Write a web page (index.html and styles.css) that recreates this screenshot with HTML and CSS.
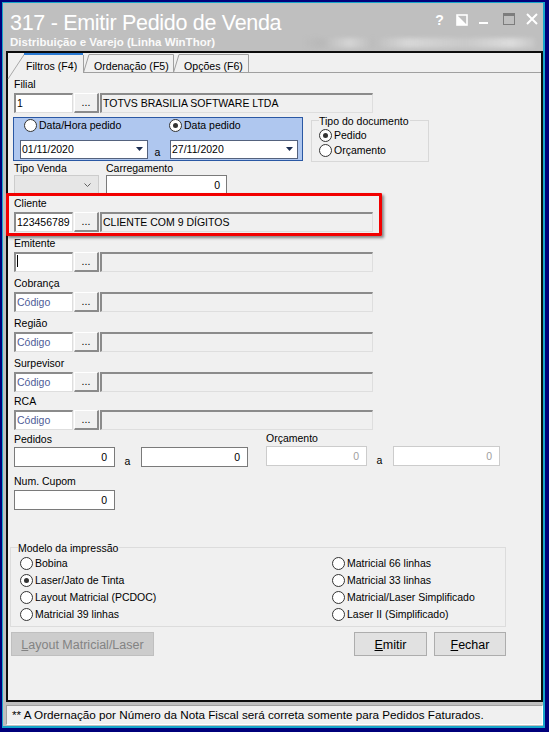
FILE: index.html
```html
<!DOCTYPE html>
<html lang="pt-BR">
<head>
<meta charset="utf-8">
<title>317 - Emitir Pedido de Venda</title>
<link rel="stylesheet" href="styles.css">
</head>
<body>
<div class="window">
  <div class="frame">

    <!-- barra de titulo -->
    <div class="titlebar">
      <div class="title-row">
        <h1 class="title">317 - Emitir Pedido de Venda</h1>
        <div class="caption-btns">
          <span class="cap-help">?</span>
          <svg class="cap-pin" width="12" height="12" viewBox="0 0 12 12"><rect x="1" y="1" width="10" height="10" fill="none" stroke="#fff" stroke-width="1.6"/><path d="M1 1 L11 11 H1 Z" fill="#fff"/></svg>
          <svg class="cap-min" width="9" height="3" viewBox="0 0 9 3"><rect width="9" height="2" fill="#fff"/></svg>
          <svg class="cap-max" width="12" height="12" viewBox="0 0 12 12"><rect x="0.5" y="0.5" width="11" height="11" fill="none" stroke="#7d7d7d"/><rect width="12" height="3" fill="#7d7d7d"/></svg>
          <svg class="cap-close" width="12" height="12" viewBox="0 0 12 12"><path d="M1 1 L11 11 M11 1 L1 11" stroke="#fff" stroke-width="2"/></svg>
        </div>
      </div>
      <div class="sub-row">
        <p class="subtitle">Distribuição e Varejo (Linha WinThor)</p>
        <div class="smudge"></div>
      </div>
    </div>

    <div class="panel">
      <div class="tabs">
        <svg class="tab-shapes" width="533" height="28" viewBox="0 0 533 28">
          <path d="M0 26 L16.5 1" stroke="#a8a8a8" fill="none"/>
          <rect x="16" y="0" width="59" height="2" fill="#2a7bd4"/>
          <path d="M75.5 2 V19.5 L81 1.5 H165.5 V19.5 L171 1.5 H240.5 V19.5" stroke="#a0a0a0" fill="none"/>
          <line x1="75" y1="19.5" x2="533" y2="19.5" stroke="#a0a0a0"/>
        </svg>
        <span class="tab t1">Filtros (F4)</span>
        <span class="tab t2">Ordenação (F5)</span>
        <span class="tab t3">Opções (F6)</span>
      </div>

      <div class="page">
        <div class="entry first">
          <div class="lbl">Filial</div>
          <div class="lookup">
            <span class="sunken code">1</span><span class="dots">...</span><span class="sunken name">TOTVS BRASILIA SOFTWARE LTDA</span>
          </div>
        </div>

        <div class="date-row">
          <div class="date-group">
            <div class="date-radios">
              <span class="radio"><i></i>Data/Hora pedido</span>
              <span class="radio on"><i></i>Data pedido</span>
            </div>
            <div class="date-combos">
              <span class="combo">01/11/2020<svg class="arrow" width="7" height="4" viewBox="0 0 7 4"><path d="M0 0 H7 L3.5 4 Z" fill="#1c2e52"/></svg></span>
              <span class="sep">a</span>
              <span class="combo">27/11/2020<svg class="arrow" width="7" height="4" viewBox="0 0 7 4"><path d="M0 0 H7 L3.5 4 Z" fill="#1c2e52"/></svg></span>
            </div>
          </div>
          <div class="group doc-group">
            <div class="group-title">Tipo do documento</div>
            <span class="radio on"><i></i>Pedido</span>
            <span class="radio"><i></i>Orçamento</span>
          </div>
        </div>

        <div class="venda-row">
          <div class="col-venda">
            <div class="lbl tight">Tipo Venda</div>
            <div class="combo-off"><svg class="chev" width="7" height="4" viewBox="0 0 7 4"><path d="M0.5 0.5 L3.5 3.5 L6.5 0.5" fill="none" stroke="#606060"/></svg></div>
          </div>
          <div class="col-carreg">
            <div class="lbl tight">Carregamento</div>
            <div class="edit num">0</div>
          </div>
        </div>

        <div class="entry cliente">
          <div class="lbl">Cliente</div>
          <div class="lookup">
            <span class="sunken code">123456789</span><span class="dots">...</span><span class="sunken name">CLIENTE COM 9 DÍGITOS</span>
          </div>
          <div class="highlight"></div>
        </div>

        <div class="entry">
          <div class="lbl">Emitente</div>
          <div class="lookup">
            <span class="sunken code"><span class="caret"></span></span><span class="dots">...</span><span class="sunken name"></span>
          </div>
        </div>

        <div class="entry">
          <div class="lbl">Cobrança</div>
          <div class="lookup">
            <span class="sunken code ph">Código</span><span class="dots">...</span><span class="sunken name"></span>
          </div>
        </div>

        <div class="entry">
          <div class="lbl">Região</div>
          <div class="lookup">
            <span class="sunken code ph">Código</span><span class="dots">...</span><span class="sunken name"></span>
          </div>
        </div>

        <div class="entry">
          <div class="lbl">Surpevisor</div>
          <div class="lookup">
            <span class="sunken code ph">Código</span><span class="dots">...</span><span class="sunken name"></span>
          </div>
        </div>

        <div class="entry rca">
          <div class="lbl">RCA</div>
          <div class="lookup">
            <span class="sunken code ph">Código</span><span class="dots">...</span><span class="sunken name"></span>
          </div>
        </div>

        <div class="ranges">
          <div class="range">
            <div class="lbl short">Pedidos</div>
            <div class="range-fields">
              <span class="edit num w1">0</span><span class="sep">a</span><span class="edit num w2">0</span>
            </div>
          </div>
          <div class="range orc">
            <div class="lbl short">Orçamento</div>
            <div class="range-fields">
              <span class="edit num w1 off">0</span><span class="sep">a</span><span class="edit num w2 off">0</span>
            </div>
          </div>
        </div>

        <div class="cupom">
          <div class="lbl">Num. Cupom</div>
          <div class="edit num w1">0</div>
        </div>

        <div class="group print-group">
          <div class="group-title">Modelo da impressão</div>
          <div class="print-grid">
            <span class="radio"><i></i>Bobina</span>
            <span class="radio on"><i></i>Laser/Jato de Tinta</span>
            <span class="radio"><i></i>Layout Matricial (PCDOC)</span>
            <span class="radio"><i></i>Matricial 39 linhas</span>
            <span class="radio"><i></i>Matricial 66 linhas</span>
            <span class="radio"><i></i>Matricial 33 linhas</span>
            <span class="radio"><i></i>Matricial/Laser Simplificado</span>
            <span class="radio"><i></i>Laser II (Simplificado)</span>
          </div>
        </div>

        <div class="actions">
          <span class="btn btn-layout"><u>L</u>ayout Matricial/Laser</span>
          <span class="btn btn-emitir"><u>E</u>mitir</span>
          <span class="btn btn-fechar"><u>F</u>echar</span>
        </div>
      </div>
    </div>

    <div class="statusbar">** A Ordernação por Número da Nota Fiscal será correta somente para Pedidos Faturados.</div>
  </div>
</div>
</body>
</html>
```

FILE: styles.css
```css
body {
    margin: 0;
    font-family: "Liberation Sans", Arial, sans-serif;
    font-size: 10.5px;
    color: #000;
    background: #fff;
}

/* janela com borda azul */
.window {
    width: 549px;
    height: 732px;
    box-sizing: border-box;
    border: solid #00007b;
    border-width: 2px 4px 4px 2px;
    padding: 1px 2px 2px 1px;
    background: #17a5ca;
}

.frame {
    height: 100%;
    background: #bfbfbf;
    display: flex;
    flex-direction: column;
}

/* titulo */
.titlebar {
    height: 48px;
    color: #fff;
    flex: none;
}

.title-row {
    display: flex;
    align-items: flex-start;
    padding: 8px 0 0 7px;
}

.title {
    margin: 0;
    font-weight: normal;
    font-size: 21.5px;
    line-height: 24px;
    letter-spacing: -0.3px;
    white-space: nowrap;
}

.caption-btns {
    margin: 2px 5px 0 auto;
    display: flex;
    align-items: flex-start;
}

.cap-help {
    width: 9px;
    text-align: center;
    font-weight: bold;
    font-size: 14px;
    line-height: 14px;
}

.cap-pin { margin: 1px 0 0 12px; }
.cap-min { margin: 9px 0 0 11px; }
.cap-max { margin: 0 0 0 15px; }
.cap-close { margin: 0 0 0 11px; }

.sub-row {
    display: flex;
    align-items: flex-start;
}

.subtitle {
    margin: 1px 0 0 7px;
    font-weight: bold;
    font-size: 11.5px;
    line-height: 13px;
    color: #fafafa;
    white-space: nowrap;
}

.smudge {
    margin: 3px 8px 0 auto;
    width: 232px;
    height: 10px;
    background: linear-gradient(90deg, rgba(255,255,255,0) 0%, rgba(170,170,170,.3) 8%, rgba(240,240,240,.45) 20%, rgba(180,180,180,.25) 30%, rgba(245,245,245,.45) 45%, rgba(220,220,220,.35) 70%, rgba(250,250,250,.5) 90%, rgba(255,255,255,.1) 100%);
    filter: blur(2px);
}

/* painel principal */
.panel {
    flex: none;
    margin-left: 3px;
    width: 537px;
    height: 651px;
    box-sizing: border-box;
    border: 2px solid #0c0c0c;
    background: #f0f0f0;
}

.tabs {
    position: relative;
    display: flex;
    height: 20px;
    padding-left: 18px;
    font-size: 10.6px;
}

.tab-shapes {
    position: absolute;
    left: 0;
    top: 0;
    overflow: visible;
}

.tab {
    position: relative;
    padding-top: 7px;
    line-height: 12px;
    white-space: nowrap;
}

.t1 { width: 68px; }
.t2 { width: 90px; }

.page {
    padding: 5px 0 0 6px;
}

.lbl {
    height: 12px;
    line-height: 12px;
    margin-bottom: 3px;
    white-space: nowrap;
}

.lbl.tight { margin-bottom: 1px; }
.lbl.short { margin-bottom: 2px; }

.entry { margin-top: 5px; }
.entry.first { margin-top: 0; }
.entry.cliente { margin-top: 2px; position: relative; }
.entry.rca { margin-top: 3px; }

.lookup {
    display: flex;
    height: 20px;
}

.sunken {
    box-sizing: border-box;
    height: 20px;
    border-style: solid;
    border-width: 2px 1px 1px 2px;
    border-color: #8b8b8b #dedede #dedede #8b8b8b;
    line-height: 16px;
    padding-left: 1px;
    white-space: nowrap;
    overflow: hidden;
}

.code {
    width: 59px;
    background: #fff;
}

.name {
    width: 273px;
    margin-left: 1px;
    background: #f0f0f0;
}

.ph { color: #4e5c97; }

.caret {
    display: block;
    width: 1px;
    height: 12px;
    margin-top: 1px;
    background: #000;
}

.dots {
    box-sizing: border-box;
    width: 25px;
    height: 20px;
    margin-left: 1px;
    border-style: solid;
    border-width: 1px 2px 2px 1px;
    border-color: #fff #8b8b8b #8b8b8b #fff;
    background: #f0f0f0;
    text-align: center;
    line-height: 17px;
}

/* grupo de datas */
.date-row {
    display: flex;
    align-items: flex-start;
    margin-top: 4px;
}

.date-group {
    margin-left: -1px;
    width: 290px;
    height: 44px;
    box-sizing: border-box;
    border: 1px solid #2a58a4;
    background: #afc7ef;
    padding: 1px 0 0 10px;
}

.date-radios {
    display: flex;
    height: 13px;
}

.date-radios .radio:first-child { width: 145px; }

.date-combos {
    display: flex;
    margin: 8px 0 0 -4px;
}

.combo {
    display: flex;
    width: 128px;
    height: 19px;
    box-sizing: border-box;
    border: 1px solid #54627d;
    background: #fff;
    line-height: 17px;
    padding-left: 1px;
}

.arrow {
    margin: 6px 4px 0 auto;
}

.sep {
    width: 22px;
    box-sizing: border-box;
    padding: 6px 3px 0 0;
    text-align: center;
    line-height: 13px;
}

.group {
    box-sizing: border-box;
    border: 1px solid #d8d8d8;
}

.group-title {
    display: table;
    margin: -6px 0 0 7px;
    padding-right: 1px;
    background: #f0f0f0;
    line-height: 12px;
}

.doc-group {
    margin: 3px 0 0 8px;
    width: 118px;
    height: 42px;
}

.doc-group .radio {
    margin: 2px 0 0 7px;
}

/* radio button */
.radio {
    display: flex;
    align-items: center;
    height: 13px;
    line-height: 13px;
    white-space: nowrap;
}

.radio i {
    position: relative;
    flex: none;
    width: 13px;
    height: 13px;
    box-sizing: border-box;
    border: 1px solid #333;
    border-radius: 50%;
    background: #fff;
    margin-right: 2px;
}

.radio.on i::after {
    content: "";
    position: absolute;
    left: 3px;
    top: 3px;
    width: 5px;
    height: 5px;
    border-radius: 50%;
    background: #333;
}

/* tipo venda / carregamento */
.venda-row {
    display: flex;
}

.col-venda { width: 85px; }

.col-carreg {
    width: 121px;
    margin-left: 7px;
}

.combo-off {
    display: flex;
    width: 85px;
    height: 19px;
    box-sizing: border-box;
    border: 1px solid #cccccc;
    background: #e6e6e6;
}

.chev { margin: 7px 7px 0 auto; }

.edit {
    display: block;
    box-sizing: border-box;
    height: 20px;
    border: 1px solid #7a7a7a;
    background: #fff;
    line-height: 18px;
    white-space: nowrap;
}

.num {
    text-align: right;
    padding-right: 7px;
}

.col-carreg .num { padding-right: 6px; }

.edit.off {
    border-color: #cccccc;
    color: #a0a0a0;
}

.highlight {
    position: absolute;
    left: -8px;
    top: -4px;
    width: 376px;
    height: 43px;
    box-sizing: border-box;
    border: 3px solid #f20000;
    border-radius: 1px;
    box-shadow: 2px 2px 3px rgba(0, 0, 0, .45);
    pointer-events: none;
}

/* faixas pedidos / orcamento */
.ranges {
    display: flex;
    align-items: flex-start;
    margin-top: 3px;
}

.range-fields { display: flex; }

.range-fields .sep {
    width: 26px;
    padding: 8px 1px 0 0;
}

.w1 { width: 101px; }
.w2 { width: 107px; }

.range.orc {
    margin: -1px 0 0 18px;
}

.cupom { margin-top: 7px; }

/* modelo da impressao */
.print-group {
    margin: 37px 0 0 -4px;
    width: 496px;
    height: 80px;
    border-color: #dcdcdc;
}

.group-title + .print-grid { margin-top: 1px; }

.print-grid {
    display: grid;
    grid-template-columns: 312px auto;
    grid-template-rows: repeat(4, 17px);
    grid-auto-flow: column;
    padding-left: 9px;
}

.print-grid .radio { height: 17px; }

/* botoes */
.actions {
    display: flex;
    margin: 5px 0 0 -3px;
}

.btn {
    height: 24px;
    box-sizing: border-box;
    border: 1px solid #adadad;
    background: #e1e1e1;
    font-size: 12.5px;
    line-height: 22px;
    padding-top: 1px;
    text-align: center;
    white-space: nowrap;
}

.btn-layout {
    width: 143px;
    background: #cccccc;
    border-color: #bfbfbf;
    color: #838383;
}

.btn-emitir {
    width: 73px;
    margin-left: 200px;
}

.btn-fechar {
    width: 72px;
    margin-left: 7px;
}

/* barra de status */
.statusbar {
    flex: none;
    margin: 3px 0 0 3px;
    width: 537px;
    height: 20px;
    box-sizing: border-box;
    border: 1px solid;
    border-color: #a0a0a0 #fff #fff #a0a0a0;
    background: #f0f0f0;
    font-size: 11.7px;
    line-height: 18px;
    padding-left: 5px;
    white-space: nowrap;
}
```
